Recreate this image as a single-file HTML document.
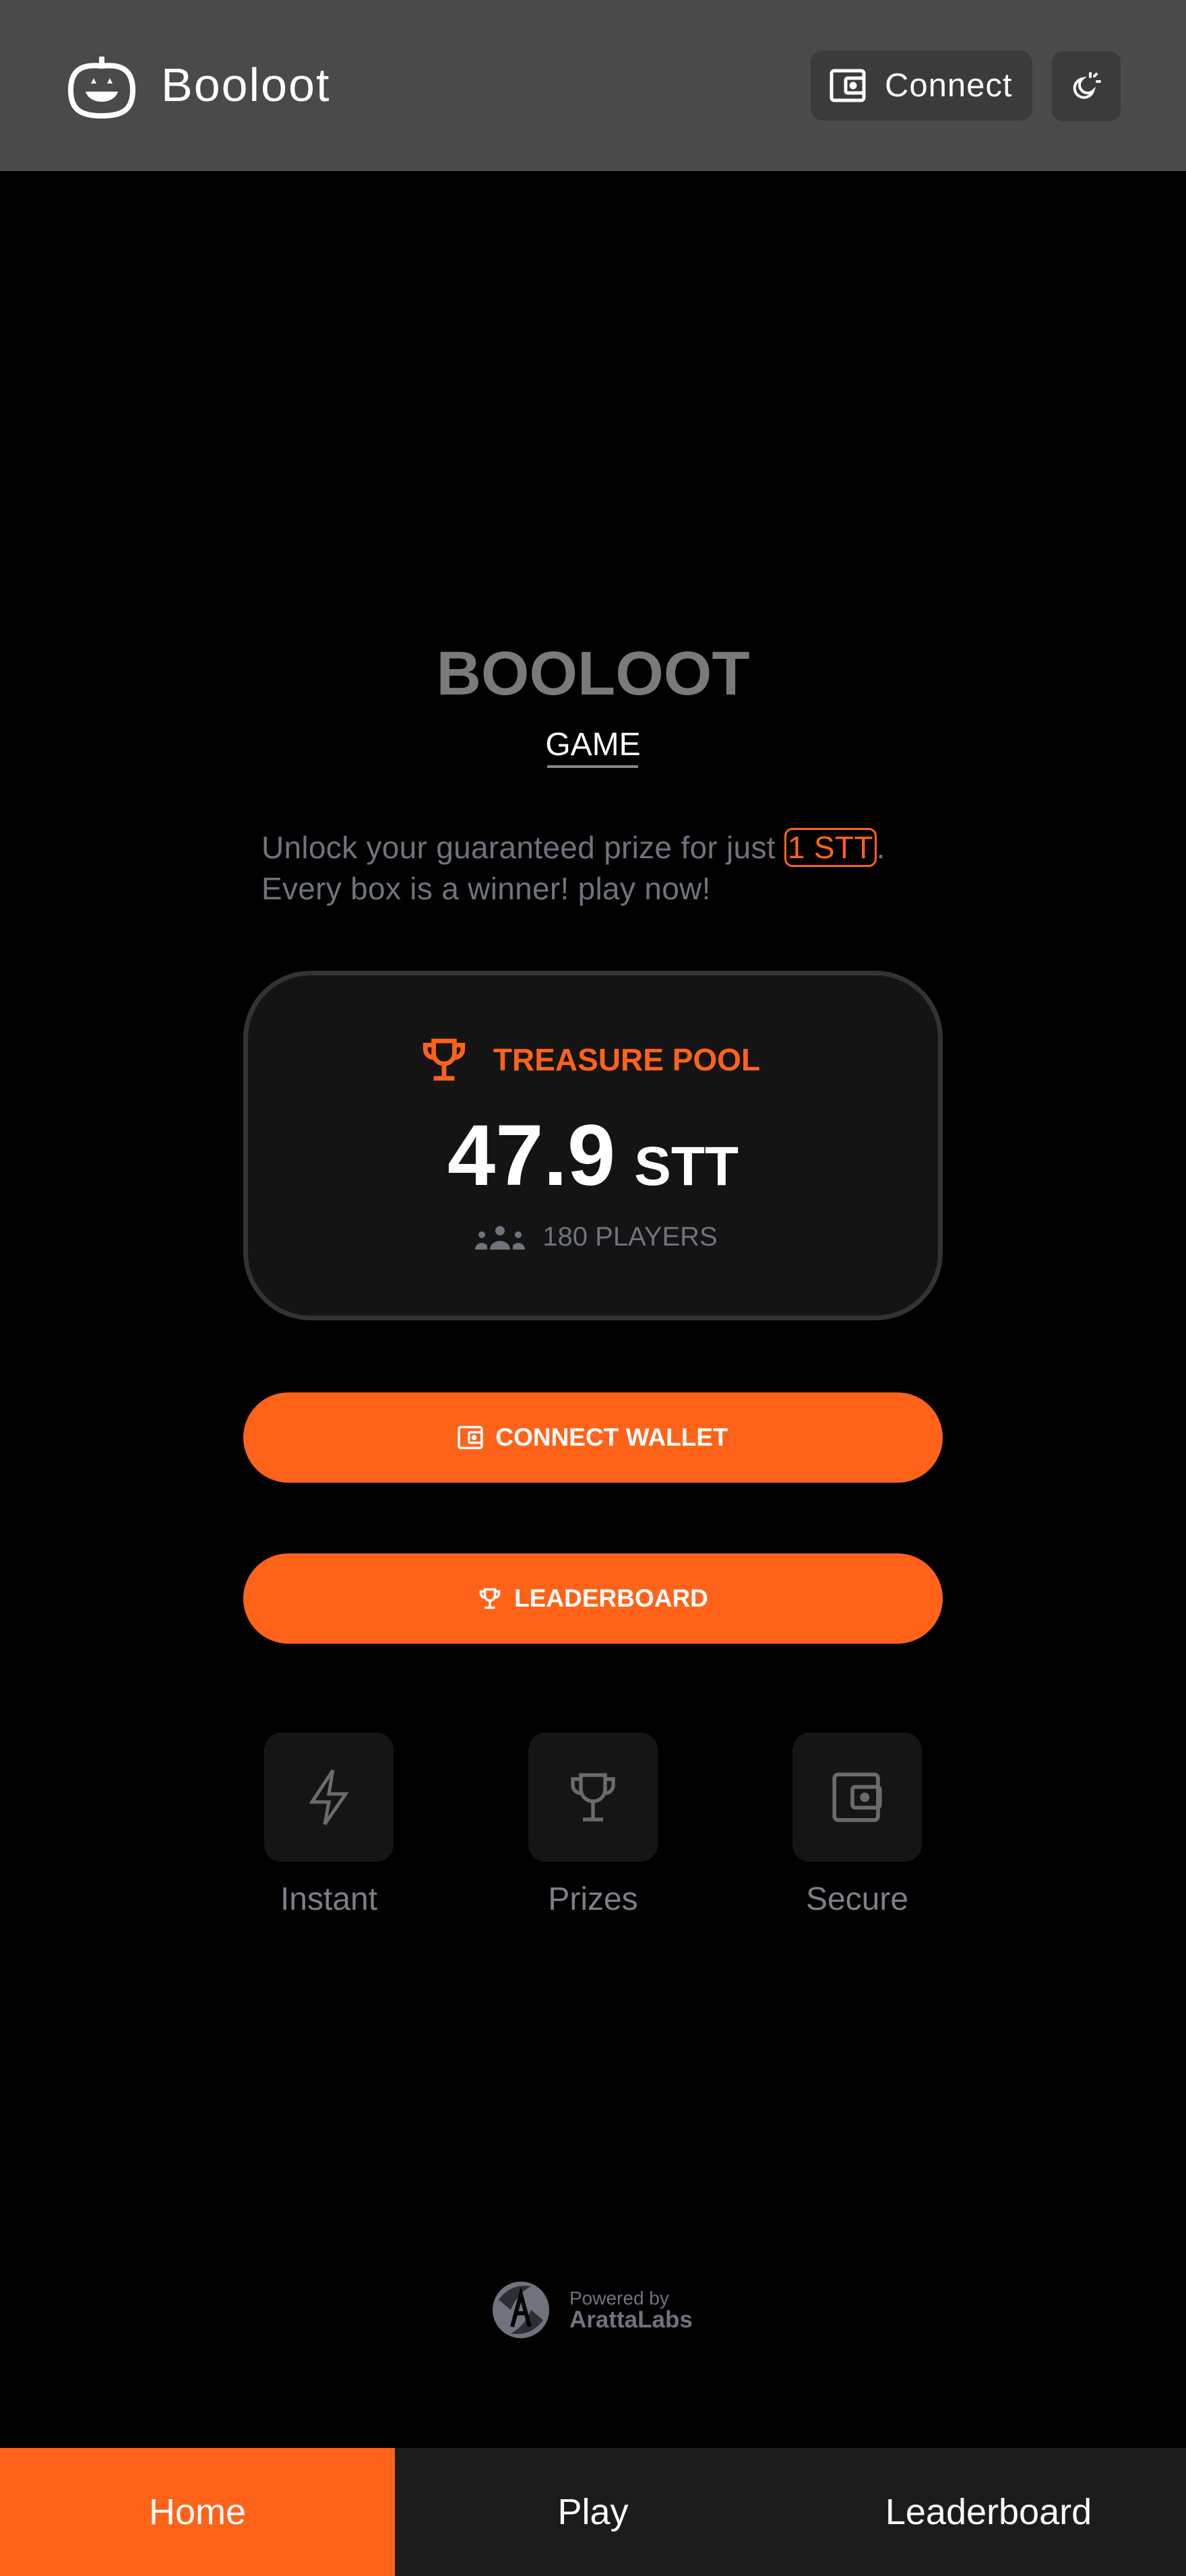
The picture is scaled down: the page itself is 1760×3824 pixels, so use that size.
<!DOCTYPE html>
<html><head><meta charset="utf-8"><style>
*{margin:0;padding:0;box-sizing:border-box}
body{width:1760px;height:3824px;background:#000;font-family:"Liberation Sans",sans-serif;position:relative;overflow:hidden}
.abs{position:absolute}
.hdr{left:0;top:0;width:1760px;height:254px;background:#4a4a4a}
.c{text-align:center;left:0;width:1760px}
.btn{left:361px;width:1038px;height:134px;border-radius:67px;background:#ff6319;color:#fff;font-weight:bold;font-size:37px;display:flex;align-items:center;justify-content:center;gap:18px}
.fb{width:192px;height:192px;border-radius:26px;background:#151515;display:flex;align-items:center;justify-content:center}
.fl{width:300px;text-align:center;font-size:48px;color:#7c7f87}
</style></head><body>
<div class="abs hdr"></div>
<svg class="abs" style="left:97px;top:84px" width="108" height="94" viewBox="0 0 108 94" fill="none" stroke="#fff" stroke-width="8">
<path d="M54 14 C20 10 8 24 8 50 C8 78 22 88 54 88 C86 88 100 78 100 50 C100 24 88 10 54 14Z"/>
<path d="M54 14 L54 2" stroke-linecap="round"/>
<path d="M30 52 C36 72 72 72 78 52 Z" fill="#fff" stroke="none"/>
<path d="M38 40 l4 -8 l4 8z M62 40 l4 -8 l4 8z" fill="#fff" stroke="none"/>
</svg>
<div class="abs" style="left:239px;top:86px;font-size:70px;color:#fff;line-height:80px;letter-spacing:2px">Booloot</div>
<div class="abs" style="left:1203px;top:75px;width:329px;height:104px;border-radius:18px;background:#3b3b3b;display:flex;align-items:center;padding-left:28px;gap:28px;color:#fff;font-size:49px;letter-spacing:1px">
<svg width="54" height="50" viewBox="0 0 54 50" fill="none" stroke="#fff" stroke-width="5"><rect x="3" y="3" width="48" height="44" rx="4"/><rect x="24" y="14" width="27" height="22" rx="3"/><circle cx="35" cy="25" r="3" fill="#fff"/></svg>Connect</div>
<div class="abs" style="left:1561px;top:76px;width:102px;height:104px;border-radius:16px;background:#3b3b3b;display:flex;align-items:center;justify-content:center">
<svg width="44" height="46" viewBox="0 0 44 46" fill="none" stroke="#fff" stroke-width="4" stroke-linecap="round"><path d="M16 12 A14 14 0 1 0 32 30 A10 10 0 0 1 16 12Z"/><path d="M28 4 v5 M38 16 h4 M34 8 l3 -3"/></svg></div>

<div class="abs c" style="top:950px;font-size:92px;font-weight:bold;color:#7a7a7a;line-height:100px">BOOLOOT</div>
<div class="abs c" style="top:1076px;font-size:48px;color:#fff;line-height:60px">GAME</div>
<div class="abs" style="left:812px;top:1136px;width:135px;height:4px;background:#888"></div>
<div class="abs" style="left:388px;top:1228px;width:1000px;font-size:46px;line-height:61px;color:#6e737d;letter-spacing:0.3px">Unlock your guaranteed prize for just <span style="color:#ff6319;border:3px solid #ff6319;border-radius:12px;padding:0 2px">1 STT</span>.<br>Every box is a winner! play now!</div>

<div class="abs" style="left:361px;top:1441px;width:1038px;height:519px;border-radius:100px;background:#141414;border:7px solid #333"></div>
<div class="abs c" style="top:1536px;display:flex;justify-content:center;align-items:center;gap:36px;color:#ff6319;font-weight:bold;font-size:46px;padding-right:10px">
<svg width="74" height="74" viewBox="0 0 24 24" fill="none" stroke="#ff6319" stroke-width="2.2"><path d="M7 3h10v6a5 5 0 0 1-10 0z M7 5H3v2a4 4 0 0 0 4 4 M17 5h4v2a4 4 0 0 1-4 4 M12 14v6 M7 21h10"/></svg>TREASURE POOL</div>
<div class="abs c" style="top:1646px;color:#fff;font-weight:bold;line-height:140px"><span style="font-size:128px">47.9</span><span style="font-size:82px;margin-left:28px">STT</span></div>
<div class="abs c" style="top:1814px;display:flex;justify-content:center;align-items:center;gap:26px;color:#6e737d;font-size:40px;padding-left:10px">
<svg width="74" height="40" viewBox="0 0 74 40" fill="#6e737d"><circle cx="37" cy="10" r="7"/><path d="M22 38 a15 13 0 0 1 30 0z"/><circle cx="10" cy="16" r="5"/><circle cx="64" cy="16" r="5"/><path d="M0 38 a10 10 0 0 1 18 -6 v6z M74 38 a10 10 0 0 0 -18 -6 v6z"/></svg>180 PLAYERS</div>

<div class="abs btn" style="top:2067px"><svg width="38" height="36" viewBox="0 0 54 50" fill="none" stroke="#fff" stroke-width="5"><rect x="3" y="3" width="48" height="44" rx="4"/><rect x="24" y="14" width="27" height="22" rx="3"/><circle cx="35" cy="25" r="3" fill="#fff"/></svg>CONNECT WALLET</div>
<div class="abs btn" style="top:2306px"><svg width="36" height="36" viewBox="0 0 24 24" fill="none" stroke="#fff" stroke-width="2.4"><path d="M7 3h10v6a5 5 0 0 1-10 0z M7 5H3v2a4 4 0 0 0 4 4 M17 5h4v2a4 4 0 0 1-4 4 M12 14v6 M7 21h10"/></svg>LEADERBOARD</div>

<div class="abs fb" style="left:392px;top:2572px"><svg width="60" height="86" viewBox="0 0 60 86" fill="none" stroke="#6b6b6b" stroke-width="5" stroke-linejoin="miter"><path d="M36 3 L5 50 H30 L24 83 L55 38 H30 Z"/></svg></div>
<div class="abs fb" style="left:784px;top:2572px"><svg width="72" height="78" viewBox="0 0 24 26" fill="none" stroke="#6b6b6b" stroke-width="1.8"><path d="M6 2h12v7a6 6 0 0 1-12 0z M6 4H2v3a4 4 0 0 0 4 4 M18 4h4v3a4 4 0 0 1-4 4 M12 15v9 M7 24h10"/></svg></div>
<div class="abs fb" style="left:1176px;top:2572px"><svg width="76" height="76" viewBox="0 0 54 54" fill="none" stroke="#6b6b6b" stroke-width="4"><rect x="3" y="3" width="46" height="48" rx="4"/><rect x="22" y="16" width="29" height="22" rx="3"/><circle cx="35" cy="27" r="3" fill="#6b6b6b"/></svg></div>
<div class="abs fl" style="left:338px;top:2792px">Instant</div>
<div class="abs fl" style="left:730px;top:2792px">Prizes</div>
<div class="abs fl" style="left:1122px;top:2792px">Secure</div>

<svg class="abs" style="left:728px;top:3384px" width="90" height="90" viewBox="0 0 90 90"><circle cx="45" cy="45" r="42" fill="#6e737d"/><path d="M12 30 Q30 5 60 10 Q40 20 30 45Z M78 60 Q60 85 30 80 Q50 70 60 45Z" fill="#000" opacity=".6"/><path d="M32 70 L45 22 L58 70 M36 50 H55" stroke="#000" stroke-width="6" fill="none"/></svg>
<div class="abs" style="left:845px;top:3396px;font-size:28px;color:#6e737d">Powered by</div>
<div class="abs" style="left:845px;top:3424px;font-size:35px;font-weight:bold;color:#6e737d">ArattaLabs</div>

<div class="abs" style="left:0;top:3634px;width:1760px;height:190px;background:#1c1c1c"></div>
<div class="abs" style="left:0;top:3634px;width:586px;height:190px;background:#ff6319"></div>
<div class="abs" style="left:0;top:3634px;width:586px;line-height:190px;text-align:center;color:#fff;font-size:54px">Home</div>
<div class="abs" style="left:586px;top:3634px;width:588px;line-height:190px;text-align:center;color:#fff;font-size:54px">Play</div>
<div class="abs" style="left:1174px;top:3634px;width:586px;line-height:190px;text-align:center;color:#fff;font-size:54px">Leaderboard</div>
</body></html>
